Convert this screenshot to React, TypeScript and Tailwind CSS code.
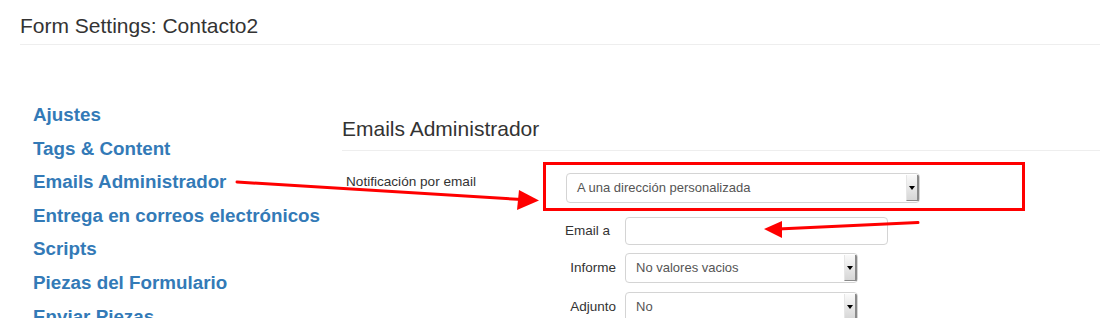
import React from 'react';

const NAV_ITEMS = [
  'Ajustes',
  'Tags & Content',
  'Emails Administrador',
  'Entrega en correos electrónicos',
  'Scripts',
  'Piezas del Formulario',
  'Enviar Piezas',
];

// select nativo estilo antiguo con botón gris a la derecha
const FakeSelect: React.FC<{ value: string; width: string }> = ({ value, width }) => (
  <div className={`${width} h-[30px] flex items-stretch rounded-[4px] border border-[#d4d4d4] bg-white overflow-hidden`}>
    <div className="flex-1 flex items-center pl-[10px] text-[13px] text-[#555]">{value}</div>
    <div className="w-[13px] my-[1px] flex items-center justify-center bg-gradient-to-b from-[#fafafa] to-[#d6d6d6] border-r-2 border-b border-[#8a8a8a] border-l border-l-[#e6e6e6]">
      <div className="w-0 h-0 border-l-[3px] border-r-[3px] border-t-[4px] border-l-transparent border-r-transparent border-t-black" />
    </div>
  </div>
);

const App: React.FC = () => {
  return (
    <div className="relative w-[1100px] h-[318px] overflow-hidden bg-white font-['Liberation_Sans',Arial,sans-serif]">
      {/* cabecera */}
      <div className="ml-[20px] pt-[14px] pb-[6px] border-b border-[#eeeeee]">
        <h1 className="text-[21px] leading-[24px] text-[#333]">Form Settings: Contacto2</h1>
      </div>

      <div className="flex">
        {/* menú lateral */}
        <nav className="w-[342px] pl-[33px] pt-[53px] flex flex-col">
          {NAV_ITEMS.map(item => (
            <a key={item} className="block text-[18.8px] leading-[33.6px] font-bold text-[#337ab7] whitespace-nowrap">
              {item}
            </a>
          ))}
        </nav>

        {/* contenido */}
        <div className="flex-1 pt-[72px]">
          <div className="pb-[9px] border-b border-[#eeeeee]">
            <h2 className="text-[21px] leading-[24px] text-[#333]">Emails Administrador</h2>
          </div>

          <div className="mt-[11px] flex items-start">
            <label className="w-[201px] pl-[4px] pt-[12px] text-[13.6px] leading-[16px] text-[#333] whitespace-nowrap">
              Notificación por email
            </label>
            <div className="w-[482px] h-[49px] border-[3px] border-[#ff0000] pl-[20px] pt-[8px]">
              <FakeSelect value="A una dirección personalizada" width="w-[354px]" />
            </div>
          </div>

          <div className="mt-[6px] flex items-center gap-[9px]">
            <label className="w-[274px] pr-[6px] text-right text-[13.5px] text-[#333]">Email a</label>
            <div className="w-[263px] h-[28px] rounded-[4px] border border-[#d4d4d4] bg-white" />
          </div>

          <div className="mt-[8px] flex items-center gap-[9px]">
            <label className="w-[274px] text-right text-[13.5px] text-[#333]">Informe</label>
            <FakeSelect value="No valores vacios" width="w-[233px]" />
          </div>

          <div className="mt-[9px] flex items-center gap-[9px]">
            <label className="w-[274px] text-right text-[13.5px] text-[#333]">Adjunto</label>
            <FakeSelect value="No" width="w-[233px]" />
          </div>
        </div>
      </div>

      {/* flechas de anotación */}
      <svg className="absolute left-0 top-0 pointer-events-none" width="1100" height="318" viewBox="0 0 1100 318">
        <line x1="237" y1="182" x2="522" y2="199.5" stroke="#ff0000" strokeWidth="3" strokeLinecap="round" />
        <polygon points="539,200.5 519,190 517,210" fill="#ff0000" />
        <line x1="918" y1="222.5" x2="778" y2="229" stroke="#ff0000" strokeWidth="3" strokeLinecap="round" />
        <polygon points="764,229 782,221 782,238" fill="#ff0000" />
      </svg>
    </div>
  );
};

export default App;
